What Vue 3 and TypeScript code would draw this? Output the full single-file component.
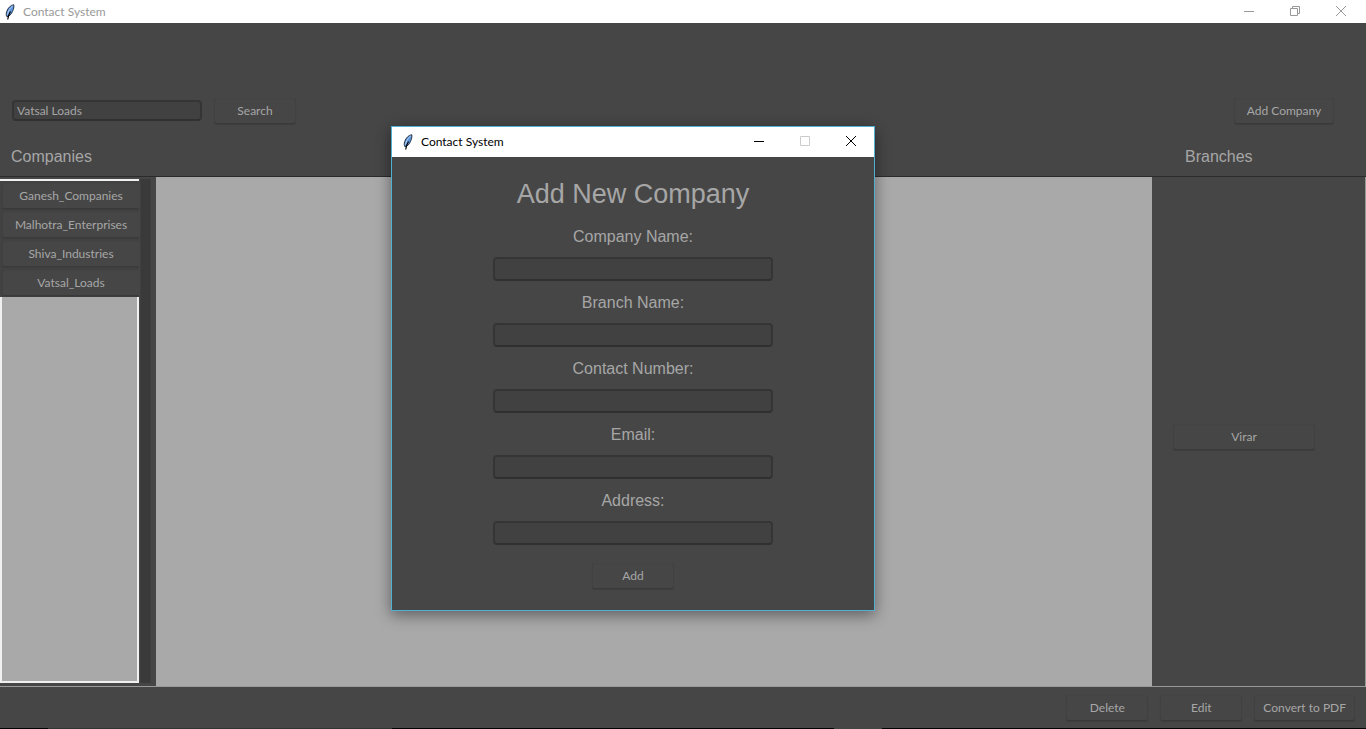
<script setup lang="ts">
import { ref } from 'vue'

interface Field {
  id: string
  label: string
  value: string
}

const query = ref('Vatsal Loads')
const companies: string[] = ['Ganesh_Companies', 'Malhotra_Enterprises', 'Shiva_Industries', 'Vatsal_Loads']
const branches: string[] = ['Virar']
const fields = ref<Field[]>([
  { id: 'company', label: 'Company Name:', value: '' },
  { id: 'branch', label: 'Branch Name:', value: '' },
  { id: 'contact', label: 'Contact Number:', value: '' },
  { id: 'email', label: 'Email:', value: '' },
  { id: 'address', label: 'Address:', value: '' },
])
</script>

<template>
  <div class="app">
    <header class="titlebar titlebar-main">
      <svg class="feather" viewBox="0 0 10 16" width="10" height="16" aria-hidden="true">
        <path d="M8.800 .7C5.800 1 2.800 4 1.700 7.500C1 9.700 1.100 11.500 1.900 12.700C4.500 12.200 6.600 10 7.500 7.400C8.600 5.300 9.200 2.600 8.800 .7Z" fill="#5b93dc" stroke="#10151f" stroke-width=".8" />
        <path d="M7.800 1.800C5 4 3.300 7 2.500 10.500" fill="none" stroke="#b9d4f7" stroke-width="1" />
        <path d="M5.500 7.500C4 9.800 3.200 12 2.700 15.500" fill="none" stroke="#000" stroke-width="1.200" />
      </svg>
      <span class="window-title">Contact System</span>
      <div class="window-controls">
        <button type="button" aria-label="Minimize">
          <svg width="10" height="10" viewBox="0 0 10 10"><path d="M0 5.500H10" /></svg>
        </button>
        <button type="button" aria-label="Restore">
          <svg width="10" height="10" viewBox="0 0 10 10"><path d="M.5 2.500H7.500V9.500H.5ZM2.500 2.500V.5H9.500V7.500H7.500" /></svg>
        </button>
        <button type="button" aria-label="Close">
          <svg width="10" height="10" viewBox="0 0 10 10"><path d="M0 0L10 10M10 0L0 10" /></svg>
        </button>
      </div>
    </header>

    <section class="top">
      <form class="toolbar" @submit.prevent>
        <input v-model="query" class="entry search" type="text" aria-label="Search companies" />
        <button class="btn" type="submit">Search</button>
        <button class="btn wide add-company" type="button">Add Company</button>
      </form>
      <div class="headings">
        <h2>Companies</h2>
        <h2 class="branches-heading">Branches</h2>
      </div>
    </section>

    <main class="content">
      <aside class="companies">
        <div class="list">
          <div class="list-items">
            <button v-for="name in companies" :key="name" class="btn item" type="button">{{ name }}</button>
          </div>
        </div>
        <div class="scrollbar"></div>
      </aside>
      <div class="canvas"></div>
      <aside class="branches">
        <button v-for="name in branches" :key="name" class="btn branch" type="button">{{ name }}</button>
      </aside>
    </main>

    <footer class="actions">
      <button class="btn" type="button">Delete</button>
      <button class="btn" type="button">Edit</button>
      <button class="btn wide" type="button">Convert to PDF</button>
    </footer>
    <div class="taskbar-edge"></div>

    <section class="dialog" role="dialog" aria-labelledby="dialog-heading">
      <header class="titlebar titlebar-dialog">
        <svg class="feather" viewBox="0 0 10 16" width="10" height="16" aria-hidden="true">
          <path d="M8.800 .7C5.800 1 2.800 4 1.700 7.500C1 9.700 1.100 11.500 1.900 12.700C4.500 12.200 6.600 10 7.500 7.400C8.600 5.300 9.200 2.600 8.800 .7Z" fill="#5b93dc" stroke="#10151f" stroke-width=".8" />
          <path d="M7.800 1.800C5 4 3.300 7 2.500 10.500" fill="none" stroke="#b9d4f7" stroke-width="1" />
          <path d="M5.500 7.500C4 9.800 3.200 12 2.700 15.500" fill="none" stroke="#000" stroke-width="1.200" />
        </svg>
        <span class="window-title">Contact System</span>
        <div class="window-controls">
          <button type="button" aria-label="Minimize">
            <svg width="10" height="10" viewBox="0 0 10 10"><path d="M0 5.500H10" /></svg>
          </button>
          <button type="button" aria-label="Maximize" disabled>
            <svg width="10" height="10" viewBox="0 0 10 10"><path d="M.5 .5H9.500V9.500H.5Z" /></svg>
          </button>
          <button type="button" aria-label="Close">
            <svg width="10" height="10" viewBox="0 0 10 10"><path d="M0 0L10 10M10 0L0 10" /></svg>
          </button>
        </div>
      </header>
      <form class="dialog-body" @submit.prevent>
        <h1 id="dialog-heading">Add New Company</h1>
        <div v-for="field in fields" :key="field.id" class="field">
          <label :for="field.id">{{ field.label }}</label>
          <input :id="field.id" v-model="field.value" class="entry" type="text" />
        </div>
        <button class="btn" type="submit">Add</button>
      </form>
    </section>
  </div>
</template>

<style>
body {
  margin: 0;
  background: #464646;
}
</style>

<style scoped>
.app {
  position: relative;
  display: flex;
  flex-direction: column;
  min-height: 100vh;
  background: #464646;
  color: #a6a6a6;
  font: 12px/16px Lato, "Open Sans", sans-serif;
}

.app *,
.app {
  box-sizing: border-box;
}

button,
input {
  font: inherit;
  color: inherit;
}

h1,
h2 {
  margin: 0;
  font-family: "Liberation Sans", Arial, sans-serif;
  font-weight: 400;
}

.titlebar {
  display: flex;
  align-items: center;
  background: #fff;
}

.titlebar-main {
  height: 23px;
  padding: 0 2px 0 5px;
  color: #999;
}

.titlebar-dialog {
  height: 30px;
  padding-left: 11px;
  color: #000;
}

.feather {
  flex: none;
  margin-right: 8px;
}

.window-controls {
  display: flex;
  align-self: stretch;
  margin-left: auto;
  padding-bottom: 2px;
}

.window-controls button {
  display: flex;
  align-items: center;
  justify-content: center;
  width: 46px;
  padding: 0;
  border: 0;
  background: none;
}

.window-controls button:disabled {
  color: #ccc;
}

.window-controls path {
  fill: none;
  stroke: currentColor;
}

.btn {
  min-width: 82px;
  height: 26px;
  padding: 0 8px;
  border: 1px solid #414141;
  border-top-color: #444;
  border-bottom-color: #3a3a3a;
  border-radius: 3px;
  background: #464646;
  box-shadow: 0 1px 1px #3e3e3e;
}

.btn.wide {
  min-width: 100px;
}

.entry {
  border: 2px solid #353535;
  border-bottom-color: #303030;
  border-radius: 4px;
  background: #414141;
  outline: 0;
}

.top {
  height: 154px;
  padding-top: 75px;
  border-bottom: 1px solid #2b2b2b;
}

.toolbar {
  display: flex;
  align-items: flex-start;
  gap: 12px;
  padding: 0 32px 0 12px;
}

.search {
  width: 190px;
  height: 21px;
  margin-top: 2px;
  padding: 0 3px;
}

.add-company {
  margin-left: auto;
}

.headings {
  display: flex;
  justify-content: space-between;
  padding: 23px 0 0 11px;
}

.headings h2 {
  font-size: 16px;
  line-height: 20px;
}

.headings .branches-heading {
  width: 181px;
}

.content {
  display: flex;
  flex: 1;
  border-bottom: 1px solid #999;
}

.companies {
  display: flex;
  width: 156px;
  padding: 2px 5px 3px 0;
  background: #464646;
}

.list {
  flex: 1;
  margin-right: 1px;
  padding-top: 2px;
  border: solid #f0f0f0;
  border-width: 0 2px 2px;
  background: linear-gradient(#f0f0f0 2px, #a9a9a9 2px);
}

.list-items {
  display: flex;
  flex-direction: column;
  gap: 3px;
  margin: 0 -2px;
  padding: 2px 0 1px 2px;
  overflow: hidden;
  background: #424242;
}

.item {
  width: 100%;
  padding: 0 4px;
  border-right-width: 0;
  border-radius: 3px 0 0 3px;
}

.scrollbar {
  width: 11px;
  border-right: 1px solid #3e3e3e;
  border-left: 1px solid #3e3e3e;
  background: #3a3a3a;
}

.canvas {
  flex: 1;
  background: #a9a9a9;
}

.branches {
  display: flex;
  flex-direction: column;
  justify-content: center;
  gap: 3px;
  width: 214px;
  padding: 10px 50px 0 21px;
  border-right: 1px solid #999;
}

.actions {
  display: flex;
  justify-content: flex-end;
  gap: 12px;
  height: 41px;
  padding: 8px 11px 0;
}

.taskbar-edge {
  height: 1px;
  background: linear-gradient(90deg, #000 48px, #333 48px 392px, #000 392px 834px, #444 834px 882px, #000 882px);
}

.dialog {
  position: absolute;
  top: 126px;
  left: 391px;
  width: 484px;
  border: 1px solid #4fb0d3;
  background: #464646;
  box-shadow: 0 4px 14px rgba(0, 0, 0, 0.45);
}

.dialog-body {
  display: flex;
  flex-direction: column;
  align-items: center;
  padding: 21px 0;
}

.dialog-body h1 {
  margin-bottom: 17px;
  font-size: 27px;
  line-height: 32px;
}

.field {
  display: flex;
  flex-direction: column;
  align-items: center;
  gap: 10px;
  margin-bottom: 12px;
}

.field label {
  font: 16px/20px "Liberation Sans", Arial, sans-serif;
}

.field .entry {
  width: 280px;
  height: 24px;
  padding: 0 4px;
}

.dialog-body .btn {
  margin-top: 6px;
}
</style>
